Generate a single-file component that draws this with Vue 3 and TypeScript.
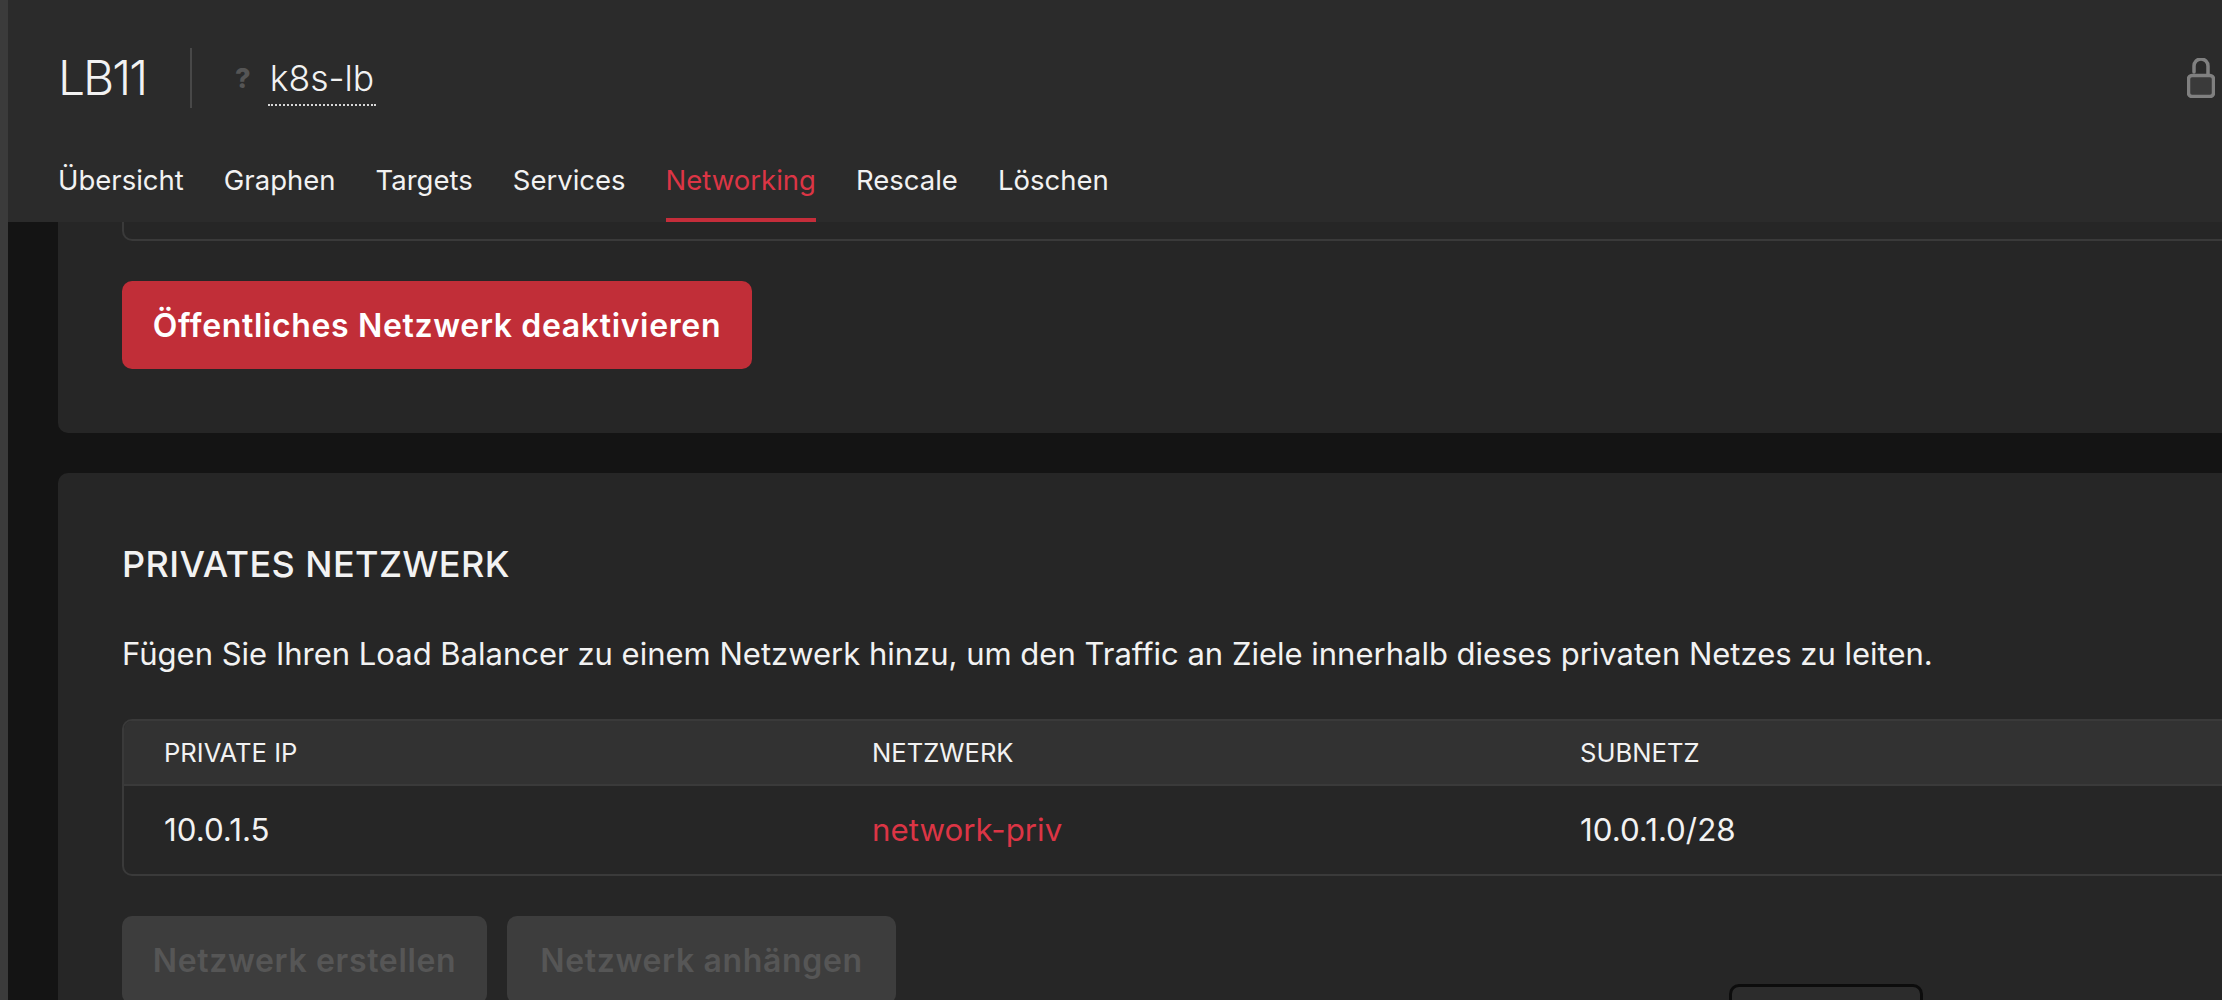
<template>
  <div class="page">
    <div class="rail"></div>
    <main class="main">
      <header class="top">
        <div class="title-row">
          <h1 class="lb-name">LB11</h1>
          <span class="divider"></span>
          <span class="help">?</span>
          <span class="label">k8s-lb</span>
          <svg class="lock" viewBox="0 0 28 40" width="28" height="40">
            <path d="M7 14V8a7 7 0 0 1 14 0v9" fill="none" stroke="#808080" stroke-width="3.5" stroke-linecap="round" />
            <rect x="1.5" y="17.5" width="25" height="21" rx="3.5" fill="#3a3a3a" stroke="#808080" stroke-width="3.5" />
          </svg>
        </div>
        <nav class="tabs">
          <a
            v-for="tab in tabs"
            :key="tab"
            class="tab"
            :class="{ 'tab--active': tab === activeTab }"
          >{{ tab }}</a>
        </nav>
      </header>

      <div class="content">
        <section class="card card--first">
          <div class="cut-box"></div>
          <button class="btn btn--danger">Öffentliches Netzwerk deaktivieren</button>
        </section>

        <section class="card card--second">
          <h2 class="card-title">PRIVATES NETZWERK</h2>
          <p class="card-text">Fügen Sie Ihren Load Balancer zu einem Netzwerk hinzu, um den Traffic an Ziele innerhalb dieses privaten Netzes zu leiten.</p>
          <div class="table">
            <div class="table-row table-row--head">
              <span v-for="col in columns" :key="col" class="cell">{{ col }}</span>
            </div>
            <div class="table-row">
              <span class="cell">10.0.1.5</span>
              <span class="cell cell--link">network-priv</span>
              <span class="cell">10.0.1.0/28</span>
            </div>
          </div>
          <div class="actions">
            <button class="btn btn--disabled">Netzwerk erstellen</button>
            <button class="btn btn--disabled">Netzwerk anhängen</button>
          </div>
        </section>
      </div>
      <div class="floating"></div>
    </main>
  </div>
</template>

<script setup lang="ts">
const tabs: string[] = ['Übersicht', 'Graphen', 'Targets', 'Services', 'Networking', 'Rescale', 'Löschen']
const activeTab = 'Networking'
const columns: string[] = ['PRIVATE IP', 'NETZWERK', 'SUBNETZ']
</script>

<style>
html,
body {
  margin: 0;
  background: #141414;
  overflow: hidden;
}
</style>

<style scoped>
.page {
  display: flex;
  width: 2222px;
  height: 1000px;
  overflow: hidden;
  background: #141414;
  font-family: Inter, "Liberation Sans", sans-serif;
  color: #f2f2f2;
}

.rail {
  flex: 0 0 8px;
  background: #3b3b3b;
}

.main {
  position: relative;
  flex: 1;
  min-width: 0;
  overflow: hidden;
}

.top {
  height: 222px;
  box-sizing: border-box;
  padding: 48px 0 0 50px;
  background: #2b2b2b;
}

.title-row {
  display: flex;
  align-items: center;
  height: 60px;
}

.lb-name {
  margin: 0;
  font-size: 48px;
  font-weight: 300;
  letter-spacing: -2px;
  line-height: 60px;
}

.divider {
  width: 2px;
  height: 60px;
  margin-left: 44px;
  background: #484848;
}

.help {
  margin-left: 43px;
  font-size: 27px;
  font-weight: 800;
  color: #555;
}

.label {
  margin: 6px 0 0 17px;
  padding: 0 2px 3px;
  border-bottom: 2px dotted #d8d8d8;
  font-size: 35.5px;
  font-weight: 300;
  line-height: 44px;
}

.lock {
  position: absolute;
  top: 58px;
  right: 7px;
}

.tabs {
  display: flex;
  gap: 40px;
  margin-top: 32px;
}

.tab {
  height: 82px;
  box-sizing: border-box;
  border-bottom: 4px solid transparent;
  font-size: 27.5px;
  line-height: 80px;
  color: #f2f2f2;
}

.tab--active {
  border-bottom-color: #c52d3a;
  color: #dc3545;
}

.content {
  width: 2400px;
  padding-left: 50px;
}

.card {
  box-sizing: border-box;
  padding: 0 64px;
  background: #262626;
}

.card--first {
  height: 211px;
  border-radius: 0 0 10px 10px;
}

.cut-box {
  height: 19px;
  box-sizing: border-box;
  margin-bottom: 40px;
  border: 2px solid #3a3a3a;
  border-top: none;
  border-radius: 0 0 10px 10px;
}

.card--second {
  margin-top: 40px;
  padding-top: 67px;
  border-radius: 10px 10px 0 0;
}

.btn {
  height: 88px;
  box-sizing: border-box;
  padding: 0;
  border: none;
  border-radius: 10px;
  font-family: Inter, "Liberation Sans", sans-serif;
  font-size: 32px;
  font-weight: 600;
  letter-spacing: 0.65px;
}

.btn--danger {
  width: 630px;
  background: #c12e38;
  color: #fff;
}

.btn--disabled {
  background: #3d3d3d;
  color: #565656;
}

.btn--disabled:first-child {
  width: 365px;
}

.btn--disabled:last-child {
  width: 389px;
}

.card-title {
  margin: 0;
  font-size: 36px;
  font-weight: 500;
  letter-spacing: 0.4px;
  line-height: 48px;
}

.card-text {
  margin: 44px 0 0;
  font-size: 31px;
  line-height: 44px;
}

.table {
  margin-top: 43px;
  border: 2px solid #3a3a3a;
  border-radius: 10px;
  overflow: hidden;
}

.table-row {
  display: grid;
  box-sizing: border-box;
  grid-template-columns: 708px 708px 708px;
  align-items: center;
  height: 88px;
  padding-left: 40px;
  font-size: 31.3px;
}

.table-row--head {
  height: 65px;
  border-bottom: 2px solid #3a3a3a;
  background: #323232;
  font-size: 25.6px;
}

.cell--link {
  color: #dc3545;
}

.actions {
  display: flex;
  gap: 20px;
  margin-top: 40px;
}

.floating {
  position: absolute;
  top: 984px;
  left: 1721px;
  width: 194px;
  height: 60px;
  box-sizing: border-box;
  border: 3px solid #0c0c0c;
  border-radius: 10px;
  background: #2c2c2c;
}
</style>
